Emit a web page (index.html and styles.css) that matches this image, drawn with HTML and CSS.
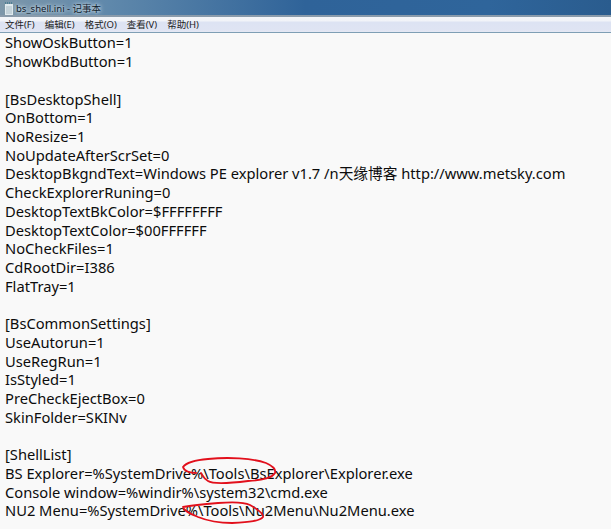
FILE: index.html
```html
<!DOCTYPE html>
<html lang="zh">
<head>
<meta charset="utf-8">
<title>bs_shell.ini - 记事本</title>
<link rel="stylesheet" href="styles.css">
</head>
<body>
<div class="window">
  <header class="titlebar">
    <svg class="app-icon" width="12" height="15" viewBox="0 0 12 15">
      <rect x="1.5" y="2.5" width="9" height="12" fill="#dfe9ee" stroke="#7f97a5"/>
      <path d="M2.5 1v2M4.5 1v2M6.5 1v2M8.5 1v2" stroke="#4e7f95" stroke-width="1"/>
      <path d="M3 6h6M3 8h6M3 10h6M3 12h6" stroke="#a9bcc6" stroke-width="1"/>
    </svg>
    <span class="title">bs_shell.ini - 记事本</span>
  </header>
  <nav class="menubar">
    <span>文件(F)</span>
    <span>编辑(E)</span>
    <span>格式(O)</span>
    <span>查看(V)</span>
    <span>帮助(H)</span>
  </nav>
  <main class="editor">
<pre class="content">ShowOskButton=1
ShowKbdButton=1

[BsDesktopShell]
OnBottom=1
NoResize=1
NoUpdateAfterScrSet=0
DesktopBkgndText=Windows PE explorer v1.7 /n天缘博客 http://www.metsky.com
CheckExplorerRuning=0
DesktopTextBkColor=$FFFFFFFF
DesktopTextColor=$00FFFFFF
NoCheckFiles=1
CdRootDir=I386
FlatTray=1

[BsCommonSettings]
UseAutorun=1
UseRegRun=1
IsStyled=1
PreCheckEjectBox=0
SkinFolder=SKINv

[ShellList]
BS Explorer=%SystemDrive%\Tools\BsExplorer\Explorer.exe
Console window=%windir%\system32\cmd.exe
NU2 Menu=%SystemDrive%\Tools\Nu2Menu\Nu2Menu.exe</pre>
  </main>
  <svg class="marks" width="611" height="529" viewBox="0 0 611 529">
    <path d="M196 473C190 473 184 471 183 467C186 463 196 460 208 459C228 457 252 458 266 463C273 466 276 470 275 473C272 478 264 480 248 481C232 483 214 485 208 481C204 479 203 476 201 473"/>
    <path d="M183 507C194 505 206 504 218 503C230 502 244 502 250 505C257 509 264 514 263 517C260 521 250 522 232 523C220 523 208 521 198 517C191 514 185 512 183 507"/>
  </svg>
</div>
</body>
</html>
```

FILE: styles.css
```css
html, body {
  margin: 0;
  padding: 0;
  background: #f9f9f9;
}
.window {
  position: relative;
  width: 611px;
  height: 529px;
  overflow: hidden;
  display: flex;
  flex-direction: column;
}
.titlebar {
  height: 15px;
  display: flex;
  align-items: flex-start;
  gap: 1px;
  padding-left: 3px;
  background: linear-gradient(90deg, #7d97aa 0, #5f88ab 18%, #2f6399 50%, #2f659b 80%, #2a5c8e 100%);
  overflow: hidden;
}
.app-icon {
  margin-top: 1px;
  flex: none;
}
.title {
  font: 9.5px/17px "Noto Sans", "Noto Sans CJK SC", sans-serif;
  color: #10202c;
  text-shadow: 0 0 5px #d8e6ef, 0 0 3px #d8e6ef;
}
.menubar {
  height: 15px;
  border-top: 2px solid #8a9bab;
  background: linear-gradient(#f3f5f9 0, #f1f3f8 25%, #dde3f3 35%, #dfe4f3 85%, #e6e9f4 100%);
  border-bottom: 1px solid #7f9fb5;
  display: flex;
  gap: 10px;
  padding-left: 5px;
  font: 9.5px/15px "Noto Sans", "Noto Sans CJK SC", sans-serif;
  color: #1c1c1c;
}
.menubar span {
  white-space: nowrap;
}
.editor {
  flex: 1;
  padding: 0.4px 0 0 5px;
  background: #f9f9f9;
}
.content {
  margin: 0;
  font-family: "Noto Sans", "Noto Sans CJK SC", sans-serif;
  font-size: 14.7px;
  line-height: 18.72px;
  color: #0c0c0c;
}
.marks {
  position: absolute;
  left: 0;
  top: 0;
  pointer-events: none;
}
.marks path {
  fill: none;
  stroke: #e2101c;
  stroke-width: 1.8;
  stroke-linecap: round;
}
```
